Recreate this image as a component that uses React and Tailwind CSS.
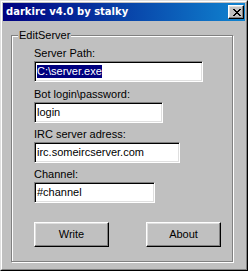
import React from "react";

const font = { fontFamily: '"Liberation Sans", Arial, sans-serif' };

function CloseGlyph() {
  const rows = [
    "XX....XX",
    ".XX..XX.",
    "..XXXX..",
    "...XX...",
    "..XXXX..",
    ".XX..XX.",
    "XX....XX",
  ];
  const rects = [];
  rows.forEach((r, y) =>
    r.split("").forEach((c, x) => {
      if (c === "X") rects.push(<rect key={`${x}-${y}`} x={x} y={y} width="1" height="1" fill="#000" />);
    })
  );
  return (
    <svg width="8" height="7" viewBox="0 0 8 7" shapeRendering="crispEdges">
      {rects}
    </svg>
  );
}

function Field({ label, value, width, selected, className = "" }) {
  return (
    <div className={`flex flex-col ${className}`}>
      <div className="h-[13px] leading-[13px] text-[11px] text-black whitespace-nowrap">{label}</div>
      <div
        className={`mt-[1px] h-[21px] ${width} bg-white border border-t-[#808080] border-l-[#808080] border-b-white border-r-white shadow-[inset_1px_1px_0_#000,inset_-1px_-1px_0_#dfdfdf] flex items-center pl-[2px]`}
      >
        <span
          className={`leading-[13px] h-[13px] text-[11px] whitespace-nowrap ${
            selected ? "bg-[#000080] text-white" : "text-black"
          }`}
        >
          {value}
        </span>
      </div>
    </div>
  );
}

function Button({ children }) {
  return (
    <div className="w-[75px] h-[25px] bg-[#c0c0c0] border border-t-white border-l-white border-b-black border-r-black shadow-[inset_-1px_-1px_0_#808080,inset_1px_1px_0_#dfdfdf] flex items-center justify-center text-[11px] leading-[13px] text-black">
      {children}
    </div>
  );
}

export default function App() {
  return (
    <div style={font} className="w-[248px] h-[271px] bg-[#c0c0c0] border border-t-[#dfdfdf] border-l-[#dfdfdf] border-b-black border-r-black">
      <div className="w-full h-full border border-t-white border-l-white border-b-[#808080] border-r-[#808080] p-[1px] flex flex-col">
        <div className="h-[18px] shrink-0 flex items-center justify-between pl-[3px] pr-[1px] bg-[linear-gradient(to_right,#000080,#1084d0)]">
          <span
            className="text-white font-bold text-[10px] leading-[12px] whitespace-nowrap"
            style={{ fontFamily: '"DejaVu Sans", Verdana, sans-serif' }}
          >
            darkirc v4.0 by stalky
          </span>
          <div className="w-[16px] h-[14px] bg-[#c0c0c0] border border-t-white border-l-white border-b-black border-r-black shadow-[inset_-1px_-1px_0_#808080,inset_1px_1px_0_#dfdfdf] flex items-center justify-center pl-[1px]">
            <CloseGlyph />
          </div>
        </div>

        <div className="relative mt-[14px] ml-[8px] w-[222px] h-[227px] border border-[#808080] shadow-[inset_1px_1px_0_#fff,1px_1px_0_#fff] pl-[22px] pt-[11px] flex flex-col">
          <span className="absolute left-[6px] top-[-7px] px-[1px] bg-[#c0c0c0] text-[11px] leading-[13px] text-black">
            EditServer
          </span>
          <Field label="Server Path:" value="C:\server.exe" width="w-[169px]" selected />
          <Field label="Bot login\password:" value="login" width="w-[129px]" className="mt-[6px]" />
          <Field label="IRC server adress:" value="irc.someircserver.com" width="w-[146px]" className="mt-[5px]" />
          <Field label="Channel:" value="#channel" width="w-[121px]" className="mt-[5px]" />
          <div className="mt-[19px] flex gap-[37px]">
            <Button>Write</Button>
            <Button>About</Button>
          </div>
        </div>
      </div>
    </div>
  );
}
